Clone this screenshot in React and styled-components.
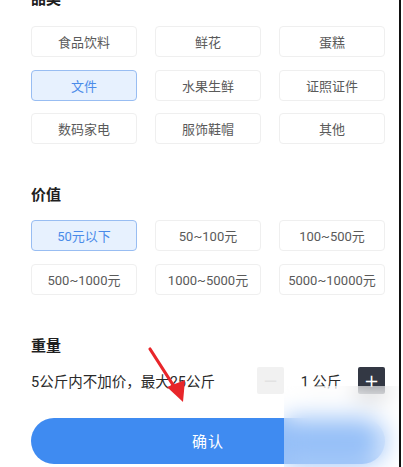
import React from "react";
import styled, { createGlobalStyle } from "styled-components";

const GlobalStyle = createGlobalStyle`
  html, body {
    margin: 0;
    padding: 0;
    background: #fff;
    overflow: hidden;
  }
  body {
    font-family: Roboto, "Noto Sans CJK SC", sans-serif;
  }
`;

const categories = [
  "食品饮料",
  "鲜花",
  "蛋糕",
  "文件",
  "水果生鲜",
  "证照证件",
  "数码家电",
  "服饰鞋帽",
  "其他",
];

const prices = [
  "50元以下",
  "50~100元",
  "100~500元",
  "500~1000元",
  "1000~5000元",
  "5000~10000元",
];

const App = () => {
  return (
    <>
      <GlobalStyle />
      <Page>
        <Title className="first">品类</Title>
        <Grid>
          {categories.map((c) => (
            <Chip key={c} $active={c === "文件"}>
              {c}
            </Chip>
          ))}
        </Grid>

        <Title>价值</Title>
        <Grid>
          {prices.map((p) => (
            <Chip key={p} $active={p === "50元以下"}>
              {p}
            </Chip>
          ))}
        </Grid>

        <Title>重量</Title>
        <WeightRow>
          <span className="hint">5公斤内不加价，最大25公斤</span>
          <Stepper>
            <StepBtn>−</StepBtn>
            <span className="value">1 公斤</span>
            <StepBtn $dark>+</StepBtn>
          </Stepper>
        </WeightRow>

        <Confirm type="button">确认</Confirm>

        <Arrow width="60" height="70" viewBox="0 0 60 70">
          <line x1="4" y1="3" x2="29" y2="42" stroke="#e8262a" strokeWidth="3.2" strokeLinecap="round" />
          <polygon points="21,41 39,34 37,56" fill="#e8262a" />
        </Arrow>
        <BlurPatch />
      </Page>
    </>
  );
};

const Page = styled.div`
  position: relative;
  width: 401px;
  height: 467px;
  box-sizing: border-box;
  border-right: 2px solid #111;
  padding: 0 16px 0 31px;
  display: flex;
  flex-direction: column;
  overflow: hidden;
`;

const Title = styled.div`
  font-size: 15px;
  line-height: 20px;
  font-weight: 700;
  color: #1f1f1f;
  margin: 41px 0 15px;

  &.first {
    margin-top: -11px;
    margin-bottom: 17px;
  }
`;

const Grid = styled.div`
  display: grid;
  grid-template-columns: repeat(3, 106px);
  grid-auto-rows: 31px;
  column-gap: 18px;
  row-gap: 12.5px;
`;

const Chip = styled.div`
  box-sizing: border-box;
  display: flex;
  align-items: center;
  justify-content: center;
  border-radius: 4px;
  font-size: 13px;
  border: 1px solid ${(p) => (p.$active ? "#98bdf2" : "#efefef")};
  background: ${(p) => (p.$active ? "#e7f1fe" : "#fff")};
  color: ${(p) => (p.$active ? "#4a8be9" : "#5a5a5a")};
`;

const WeightRow = styled.div`
  margin-top: -4px;
  height: 27px;
  display: flex;
  align-items: center;
  justify-content: space-between;
  width: 354px;

  .hint {
    font-size: 14.5px;
    color: #2a2a2a;
  }
`;

const Stepper = styled.div`
  display: flex;
  align-items: center;

  .value {
    width: 74px;
    text-align: center;
    font-size: 14.5px;
    color: #2a2a2a;
  }
`;

const StepBtn = styled.div`
  width: 27px;
  height: 27px;
  border-radius: 2px;
  display: flex;
  align-items: center;
  justify-content: center;
  font-family: "DejaVu Sans", sans-serif;
  font-size: 18px;
  background: ${(p) => (p.$dark ? "#333844" : "#f1f1f1")};
  color: ${(p) => (p.$dark ? "#fff" : "#e2e2e2")};
`;

const Confirm = styled.button`
  margin-top: 24px;
  width: 354px;
  height: 46px;
  border: none;
  border-radius: 23px;
  background: #3f8bf1;
  color: #fff;
  font-family: "Noto Sans CJK SC", sans-serif;
  font-size: 15px;
  letter-spacing: 1px;
`;

const Arrow = styled.svg`
  position: absolute;
  left: 146px;
  top: 346px;
`;

const BlurPatch = styled.div`
  position: absolute;
  left: 284px;
  top: 386px;
  width: 120px;
  height: 81px;
  background: rgba(255, 255, 255, 0.45);
  backdrop-filter: blur(12px);
`;

export default App;
